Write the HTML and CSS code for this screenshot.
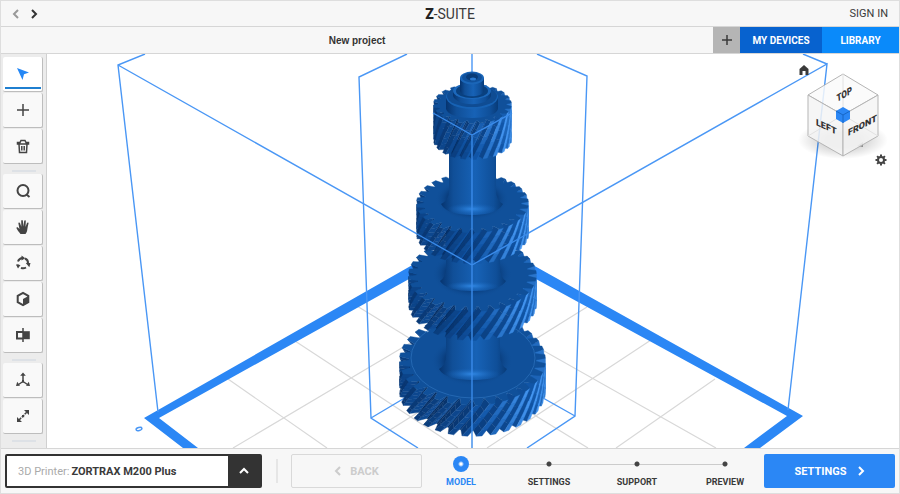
FILE: index.html
```html
<!DOCTYPE html>
<html lang="en">
<head>
  <meta charset="UTF-8">
  <meta name="viewport" content="width=device-width, initial-scale=1.0">
  <title>Z-SUITE</title>
  <link rel="stylesheet" href="styles.css">
</head>
<body>
  <header class="titlebar">
    <div class="history">
      <button class="history-btn muted" aria-label="Back"><svg width="8" height="10" viewBox="0 0 8 10"><path d="M6 1 2 5l4 4"/></svg></button>
      <button class="history-btn" aria-label="Forward"><svg width="8" height="10" viewBox="0 0 8 10"><path d="M2 1l4 4-4 4"/></svg></button>
    </div>
    <h1 class="logo"><b>Z</b>-SUITE</h1>
    <a class="sign-in" href="#">SIGN IN</a>
  </header>

  <div class="tabs">
    <div class="tab-title">New project</div>
    <button class="tab-add" aria-label="Add project"><svg width="12" height="12" viewBox="0 0 12 12"><path d="M6 1v10M1 6h10"/></svg></button>
    <a class="tab devices" href="#">MY DEVICES</a>
    <a class="tab library" href="#">LIBRARY</a>
  </div>

  <main class="workspace">
    <aside class="toolbar">
      <button class="tool active" aria-label="Select"><svg viewBox="0 0 16 16"><path class="fill" d="M2 2l12 4.500-5 1.800L7.500 14z"/></svg></button>
      <button class="tool" aria-label="Add model"><svg viewBox="0 0 16 16"><path d="M8 2v12M2 8h12"/></svg></button>
      <button class="tool" aria-label="Delete"><svg viewBox="0 0 16 16"><path d="M2.500 6V4.500h2.500L6 2.500h4l1 2h2.500V6zM4 6l.5 8.500h7L12 6M6.800 8v4.500M9.200 8v4.500"/></svg></button>
      <span class="grip"></span>
      <button class="tool" aria-label="Zoom"><svg viewBox="0 0 16 16"><circle class="thick" cx="8" cy="7.500" r="5.500"/><path class="thick" d="M11.500 11.500 14.500 14"/></svg></button>
      <button class="tool" aria-label="Pan"><svg viewBox="0 0 16 16"><path class="fill" d="M5.500 15C4 13 2.500 11.500 1.500 9.300c-.3-1 .9-1.500 1.700-.6l1.300 1.200L3.400 4.500c-.2-1.200 1.300-1.500 1.600-.4l1.300 3.700L6.200 2c0-1.200 1.600-1.200 1.700 0l.4 5.600L9.200 2c.2-1.200 1.700-1 1.600.2l-.3 5.700 1.500-3.800c.5-1 1.800-.6 1.500.5-.5 2-1 4-1.200 6-.1 2-.8 3.200-1.800 4.400z"/></svg></button>
      <button class="tool" aria-label="Rotate view"><svg viewBox="0 0 16 16"><path class="thick" d="M3 6.500A5.500 5.500 0 0 1 7 3M10 3.500a5 5 0 0 1 3 5M11 12.500a5.500 5.500 0 0 1-5 .3M3.500 11.500A5 5 0 0 1 2.500 9.500"/><path class="fill" d="M6.500.5l3.800 2.700L6.500 5.600zM10.800 8h4.700l-1.200 4.300zM1 9.500l4.500.5-2.500 3.500z"/></svg></button>
      <button class="tool" aria-label="View mode"><svg viewBox="0 0 16 16"><path class="thick" d="M8 1.800l5.300 3v6.400L8 14.200l-5.300-3V4.800z"/><path class="fill" d="M8 8l5.500-3v6.500L8 14.500z"/></svg></button>
      <button class="tool" aria-label="Split"><svg viewBox="0 0 16 16"><path d="M8 1v14"/><path class="thick" d="M8 5H2v6.500h6"/><path class="fill" d="M8 4.200h6.800v8H8z"/></svg></button>
      <span class="grip"></span>
      <button class="tool" aria-label="Move"><svg viewBox="0 0 16 16"><path d="M8 8V3M8 9.500l-4.500 3M8 9.500l4.500 3"/><path class="fill" d="M8 .5l2.800 3.300H5.200zM1 14l1.200-4.200 2.800 4zM15 14l-1.200-4.200-2.800 4zM7 8h2v2.500H7z"/></svg></button>
      <button class="tool" aria-label="Scale"><svg viewBox="0 0 16 16"><path d="M4 12l8-8" stroke-dasharray="3 1"/><path class="fill" d="M14 2v5L9 2zM2 14V9l5 5zM7 7h2.200v2.200H7z"/></svg></button>
      <span class="grip"></span>
    </aside>

    <section class="viewport">
      <svg class="scene" viewBox="46 54 854 394" preserveAspectRatio="xMidYMid slice" role="img" aria-label="Gear shaft on the build platform">
        <defs>
          <linearGradient id="shaft">
            <stop offset="0" stop-color="#06346f"/>
            <stop offset=".2" stop-color="#104f98"/>
            <stop offset=".55" stop-color="#1762b6"/>
            <stop offset=".85" stop-color="#0f4f99"/>
            <stop offset="1" stop-color="#083b78"/>
          </linearGradient>
          <radialGradient id="shade">
            <stop offset=".6" stop-color="#06346f"/>
            <stop offset="1" stop-color="#10509a" stop-opacity="0"/>
          </radialGradient>
          <radialGradient id="glow">
            <stop offset="0" stop-color="#2f86e2"/>
            <stop offset="1" stop-color="#1762b6" stop-opacity="0"/>
          </radialGradient>
        </defs>

        <path class="grid" d="M228 379l99 69M295 341l163 107M357 306l231 142M420 281l296 167M715 379l-99 69M651 340L487 448M587 307L361 448M525 275L233 448"/>
        <path class="frame" d="M144 418L472 231L803 416L760 448H744L787 416L472 244L159 418L198 448H183Z"/>
        <ellipse class="edge" cx="139" cy="429" rx="3" ry="1.500" transform="rotate(-15 139 429)"/>
        <path class="edge" d="M145 54L118 65L158 412M118 65L472 265L827 64L788 410M803 54L827 64"/>
        <path class="edge" d="M407 54L359 77L371 418L418 448M537 54L587 76L575 416L527 448M371 418L472 358L575 416M472 54V80"/>

        <g data-gear data-cy="360" data-r="73" data-k=".62" data-h="31" data-teeth="32" data-twist=".38"></g>
        <ellipse cx="473" cy="358" rx="62" ry="40" fill="none" stroke="#2468b3"/>
        <ellipse cx="472" cy="361" rx="41" ry="25" fill="url(#shade)"/>
        <path d="M446 310h54v45q0 10 7 14q-6 11-34 11t-34-11q7-4 7-14z" fill="url(#shaft)"/>
        <ellipse cx="472" cy="374" rx="28" ry="6" fill="url(#glow)"/>

        <g data-gear data-cy="275" data-r="64" data-k=".57" data-h="29" data-teeth="30" data-twist=".38"></g>
        <ellipse cx="472" cy="274" rx="40" ry="24" fill="url(#shade)"/>
        <path d="M446 230h54v37q0 10 6 14q-6 10-33 10t-33-10q6-4 6-14z" fill="url(#shaft)"/>
        <ellipse cx="472" cy="286" rx="26" ry="5" fill="url(#glow)"/>

        <g data-gear data-cy="203" data-r="56" data-k=".53" data-h="31" data-teeth="28" data-twist=".42"></g>
        <ellipse cx="472" cy="199" rx="37" ry="21" fill="url(#shade)"/>
        <path d="M449 140h47v50q0 10 7 14q-6 11-31 11t-31-11q8-4 8-14z" fill="url(#shaft)"/>
        <ellipse cx="472" cy="209" rx="25" ry="6" fill="url(#glow)"/>

        <g data-gear data-cy="104" data-r="39" data-k=".5" data-h="36" data-teeth="22" data-twist=".5"></g>
        <path d="M446 98v11c3 12 49 12 52 0V98z" fill="url(#shaft)"/>
        <ellipse cx="472" cy="97" rx="26" ry="12" fill="#1762b4"/>
        <ellipse cx="472" cy="96" rx="25" ry="11" fill="#0f4c93"/>
        <path d="M453 91v5c4 11 34 11 38 0v-5z" fill="url(#shaft)"/>
        <ellipse cx="472" cy="91" rx="19" ry="8" fill="#1c68bb"/>
        <ellipse cx="472" cy="91" rx="16" ry="7" fill="#09407f"/>
        <path d="M460 78v13c2 7 22 7 24 0V78z" fill="url(#shaft)"/>
        <ellipse cx="472" cy="78" rx="12" ry="6.500" fill="#1b66b8"/>
        <ellipse cx="472" cy="77.500" rx="10" ry="5" fill="#10519c"/>
        <ellipse cx="472" cy="77" rx="6" ry="3.500" fill="#093c79"/>
        <ellipse cx="473" cy="79" rx="3" ry="1.500" fill="#2b7bd2"/>

        <path class="front-edge" d="M433 113L472 135L512 113M472 135V448M417 234L472 265L529 233"/>
      </svg>

      <div class="view-controls">
        <button class="view-btn home" aria-label="Home view"><svg width="12" height="12" viewBox="0 0 12 12"><path d="M6 1L10.500 5v6H7.500V7h-3v4h-3V5z"/></svg></button>
        <svg class="cube" width="90" height="90" viewBox="0 0 90 90">
          <defs>
            <radialGradient id="cubeShadow">
              <stop offset=".4" stop-color="#000" stop-opacity=".18"/>
              <stop offset="1" stop-color="#000" stop-opacity="0"/>
            </radialGradient>
          </defs>
          <ellipse cx="45" cy="70" rx="45" ry="19" fill="url(#cubeShadow)"/>
          <path d="M59 76l6-4v5z" fill="#888"/>
          <path class="cube-top" d="M45 4l35 21-35 20-35-20z"/>
          <path class="cube-side" d="M10 25l35 20v41L10 66z"/>
          <path class="cube-side" d="M80 25L45 45v41l35-20z"/>
          <path class="cube-hidden" d="M45 4v41M10 66l35-21 35 21"/>
          <text transform="translate(39 32) rotate(-30) skewX(-25)">TOP</text>
          <text transform="translate(18 55) skewY(25)">LEFT</text>
          <text transform="translate(50 66) skewY(-28)">FRONT</text>
          <path class="cube-corner" d="M45 37l7 4v8l-7 4-7-4v-8z"/>
          <path class="cube-corner-line" d="M38 41l7 4 7-4M45 45v8"/>
        </svg>
        <button class="view-btn prefs" aria-label="View settings"><svg width="12" height="12" viewBox="0 0 12 12"><circle class="cog" cx="6" cy="6" r="3"/><path class="cog-teeth" d="M6 .5v2M6 9.500v2M.5 6h2M9.500 6h2M2.100 2.100l1.500 1.500M8.400 8.400l1.500 1.500M2.100 9.900l1.500-1.500M8.400 3.600l1.500-1.500"/></svg></button>
      </div>
    </section>
  </main>

  <footer class="bottombar">
    <div class="printer">
      <label for="printer">3D Printer:</label>
      <select id="printer">
        <option>ZORTRAX M200 Plus</option>
      </select>
      <span class="printer-arrow"><svg width="12" height="8" viewBox="0 0 12 8"><path d="M2 6l4-4 4 4"/></svg></span>
    </div>
    <span class="divider"></span>
    <button class="step-btn back" disabled><svg width="8" height="10" viewBox="0 0 8 10"><path d="M6 1 2 5l4 4"/></svg>BACK</button>
    <nav class="steps">
      <ol>
        <li class="current"><a href="#"><i></i>MODEL</a></li>
        <li><a href="#"><i></i>SETTINGS</a></li>
        <li><a href="#"><i></i>SUPPORT</a></li>
        <li><a href="#"><i></i>PREVIEW</a></li>
      </ol>
    </nav>
    <button class="step-btn next">SETTINGS<svg width="8" height="10" viewBox="0 0 8 10"><path d="M2 1l4 4-4 4"/></svg></button>
  </footer>
  <script src="gears.js"></script>
</body>
</html>
```

FILE: styles.css
```css
* {
  box-sizing: border-box;
}
body {
  margin: 0;
  height: 100vh;
  display: flex;
  flex-direction: column;
  font-family: Roboto, "Liberation Sans", sans-serif;
  color: #3a3a3a;
  background: #f7f7f7;
  border: 1px solid #dedede;
  overflow: hidden;
}
button {
  margin: 0;
  padding: 0;
  border: 0;
  background: none;
  font: inherit;
  color: inherit;
  cursor: pointer;
}
a {
  color: inherit;
  text-decoration: none;
}
svg {
  display: block;
}

/* title bar */
.titlebar {
  flex: none;
  height: 26px;
  display: grid;
  grid-template-columns: 1fr auto 1fr;
  align-items: center;
  padding: 0 11px;
  border-bottom: 1px solid #d6d6d6;
}
.history {
  display: flex;
  gap: 10px;
}
.history-btn svg {
  fill: none;
  stroke: #333;
  stroke-width: 2;
}
.history-btn.muted svg {
  stroke: #999;
}
.logo {
  margin: 0;
  font-size: 14px;
  line-height: 24px;
  font-weight: 400;
}
.logo b {
  font-weight: 900;
  color: #222;
}
.sign-in {
  justify-self: end;
  font-size: 11px;
}

/* project tabs */
.tabs {
  flex: none;
  height: 27px;
  display: flex;
  font-family: "Liberation Sans", Arial, sans-serif;
  font-size: 10px;
  font-weight: 700;
  line-height: 27px;
  text-align: center;
  border-bottom: 1px solid #d6d6d6;
}
.tab-title {
  flex: 1;
  color: #333;
}
.tab-add {
  width: 27px;
  display: flex;
  align-items: center;
  justify-content: center;
  background: #b5b5b5;
}
.tab-add svg {
  fill: none;
  stroke: #3a3a3a;
  stroke-width: 1.5;
}
.tab {
  color: #fff;
  font-family: Roboto, sans-serif;
}
.devices {
  width: 82px;
  background: #0762cf;
}
.library {
  width: 77px;
  background: #0a8afa;
}

/* workspace */
.workspace {
  flex: 1;
  min-height: 0;
  display: flex;
}
.toolbar {
  flex: none;
  width: 46px;
  display: flex;
  flex-direction: column;
  gap: 1px;
  padding: 3px 3px 0 2px;
  background: #ececec;
  border-right: 1px solid #d0d0d0;
  overflow: hidden;
}
.tool {
  flex: none;
  height: 35px;
  display: flex;
  align-items: center;
  justify-content: center;
  background: #f9f9f9;
  border-right: 1px solid #bdbdbd;
  border-bottom: 1px solid #bdbdbd;
  border-radius: 2px;
}
.tool svg {
  width: 16px;
  height: 16px;
  fill: none;
  stroke: #444;
  stroke-width: 1.5;
}
.tool .thick {
  stroke-width: 2;
}
.tool .fill {
  fill: #444;
  stroke: none;
}
.tool.active {
  background: #fff linear-gradient(#1f7fd0, #1f7fd0) no-repeat center 30px / 36px 2px;
}
.tool.active .fill {
  fill: #2487f5;
}
.grip {
  flex: none;
  width: 24px;
  height: 7px;
  margin-left: 9px;
  border-bottom: 2px solid #dde1e6;
  margin-bottom: 1px;
}
.viewport {
  flex: 1;
  min-width: 0;
  position: relative;
  background: #fff;
}
.scene {
  width: 100%;
  height: 100%;
}
.grid {
  fill: none;
  stroke: #d8d8d8;
  stroke-width: 1.2;
}
.frame {
  fill: #2b87f5;
}
.edge,
.front-edge {
  fill: none;
  stroke: #4a97f5;
  stroke-width: 1.4;
}
.front-edge {
  stroke: #3a8bea;
}

/* orientation cube */
.view-controls {
  position: absolute;
  top: 10px;
  right: 9px;
  width: 92px;
  display: flex;
  flex-direction: column;
}
.view-btn svg {
  fill: #3a3a3a;
}
.home {
  align-self: flex-start;
}
.prefs {
  align-self: flex-end;
  margin-right: 3px;
}
.view-btn .cog {
  fill: none;
  stroke: #444;
  stroke-width: 2;
}
.view-btn .cog-teeth {
  stroke: #444;
  stroke-width: 2;
}
.cube {
  margin: -6px 0;
}
.cube text {
  font-family: Roboto, sans-serif;
  font-size: 9px;
  font-weight: 900;
  fill: #333;
}
.cube-top,
.cube-side {
  fill: #fafafa;
  fill-opacity: .85;
  stroke: #b5b5b5;
}
.cube-side {
  fill: #f4f4f4;
}
.cube-hidden {
  fill: none;
  stroke: #e2e2e2;
}
.cube-corner {
  fill: #2b87f5;
}
.cube-corner-line {
  fill: none;
  stroke: #1767c6;
}

/* bottom bar */
.bottombar {
  flex: none;
  height: 45px;
  display: flex;
  align-items: center;
  padding: 0 4px;
  border-top: 1px solid #d6d6d6;
}
.printer {
  flex: 0 1 257px;
  height: 34px;
  display: flex;
  align-items: center;
  padding-left: 11px;
  font-size: 11px;
  background: #fff;
  border: 2px solid #333;
  border-radius: 2px;
}
.printer label {
  color: #aaa;
}
.printer select {
  flex: 1;
  min-width: 0;
  height: 30px;
  padding: 0 2px;
  appearance: none;
  border: 0;
  background: none;
  font: inherit;
  font-weight: 700;
  color: #3a3a3a;
}
.printer-arrow {
  width: 32px;
  height: 30px;
  display: flex;
  align-items: center;
  justify-content: center;
  background: #333;
}
.printer-arrow svg {
  fill: none;
  stroke: #fff;
  stroke-width: 2;
}
.divider {
  width: 2px;
  height: 24px;
  margin: 0 13px 0 14px;
  background: #e6e6e6;
}
.step-btn {
  flex: 0 1 131px;
  height: 34px;
  display: flex;
  align-items: center;
  justify-content: center;
  font-size: 11px;
  font-weight: 700;
  border-radius: 2px;
}
.step-btn svg {
  fill: none;
  stroke: currentColor;
  stroke-width: 2;
}
.back {
  gap: 8px;
  color: #ccc;
  border: 1px solid #d9d9d9;
}
.next {
  gap: 10px;
  color: #fff;
  background: #2b87f5;
}
.steps {
  flex: 1;
  padding: 0 17px;
}
.steps ol {
  display: flex;
  justify-content: space-between;
  margin: 0;
  padding: 2px 0 0;
  list-style: none;
  background: linear-gradient(#ccc, #ccc) no-repeat center 10px / calc(100% - 44px) 1px;
}
.steps a {
  width: 44px;
  display: flex;
  flex-direction: column;
  align-items: center;
  gap: 4px;
  font-size: 9px;
  line-height: 12px;
  font-weight: 700;
}
.steps i {
  width: 16px;
  height: 16px;
  background: radial-gradient(circle, #444 2px, transparent 3px);
}
.steps .current {
  color: #2b87f5;
}
.steps .current i {
  border-radius: 50%;
  background: radial-gradient(circle, #fff 1px, #2b87f5 3px);
}
```

FILE: gears.js
```js
const NS = 'http://www.w3.org/2000/svg';
const CX = 472.5;
const SLICES = 5;
const LIGHT = 0.45; // plan angle the light comes from, 0 = right

function mix(t) {
  const stops = [[3, 34, 78], [17, 86, 168], [76, 160, 252]];
  const s = Math.max(0, Math.min(0.999, t)) * 2;
  const a = stops[Math.floor(s)];
  const b = stops[Math.floor(s) + 1];
  const f = s % 1;
  return 'rgb(' + a.map((v, i) => Math.round(v + (b[i] - v) * f)).join(',') + ')';
}

function addPolygon(parent, points, fill) {
  const el = document.createElementNS(NS, 'polygon');
  el.setAttribute('points', points.map(p => p[0].toFixed(1) + ',' + p[1].toFixed(1)).join(' '));
  el.setAttribute('fill', fill);
  el.setAttribute('stroke', fill);
  el.setAttribute('stroke-width', '0.4');
  parent.appendChild(el);
}

function drawGear(g) {
  const d = g.dataset;
  const cy = +d.cy, r = +d.r, k = +d.k, h = +d.h, n = +d.teeth, twist = +d.twist;

  // tooth outline: root, root, tip, tip
  const outline = [];
  for (let i = 0; i < n; i++) {
    [[0, 0.87], [0.15, 0.87], [0.4, 1], [0.8, 1]].forEach(([f, s]) => {
      outline.push([(i + f) / n * Math.PI * 2, r * s]);
    });
  }
  const project = ([a, rad], t) => {
    const b = a + twist * t;
    return [CX + rad * Math.cos(b), cy + rad * k * Math.sin(b) + h * t];
  };

  const walls = [];
  outline.forEach((p, i) => {
    const q = outline[(i + 1) % outline.length];
    for (let s = 0; s < SLICES; s++) {
      const t0 = s / SLICES, t1 = (s + 1) / SLICES, tw = twist * (t0 + t1) / 2;
      const dx = q[1] * Math.cos(q[0] + tw) - p[1] * Math.cos(p[0] + tw);
      const dy = q[1] * Math.sin(q[0] + tw) - p[1] * Math.sin(p[0] + tw);
      const points = [project(p, t0), project(q, t0), project(q, t1), project(p, t1)];
      // skip walls that face away from the camera
      const area = points.reduce((sum, a, j) => {
        const b = points[(j + 1) % 4];
        return sum + a[0] * b[1] - b[0] * a[1];
      }, 0);
      if (area > 0) continue;
      const lit = (dy * Math.cos(LIGHT) - dx * Math.sin(LIGHT)) / Math.hypot(dx, dy);
      // side of the gear this wall sits on, so the left stays in shade
      const side = Math.max(0, Math.cos(p[0] + tw - LIGHT));
      const root = p[1] < r && q[1] < r ? 0.15 : 0;
      walls.push({
        depth: p[1] * Math.sin(p[0] + tw) + q[1] * Math.sin(q[0] + tw),
        points,
        fill: mix(0.28 + 0.12 * lit + 0.15 * side + 0.4 * Math.max(0, lit) * side ** 2 - root)
      });
    }
  });
  walls.sort((a, b) => a.depth - b.depth);
  walls.forEach(w => addPolygon(g, w.points, w.fill));
  addPolygon(g, outline.map(p => project(p, 0)), '#10509a');
}

document.querySelectorAll('[data-gear]').forEach(drawGear);
```
